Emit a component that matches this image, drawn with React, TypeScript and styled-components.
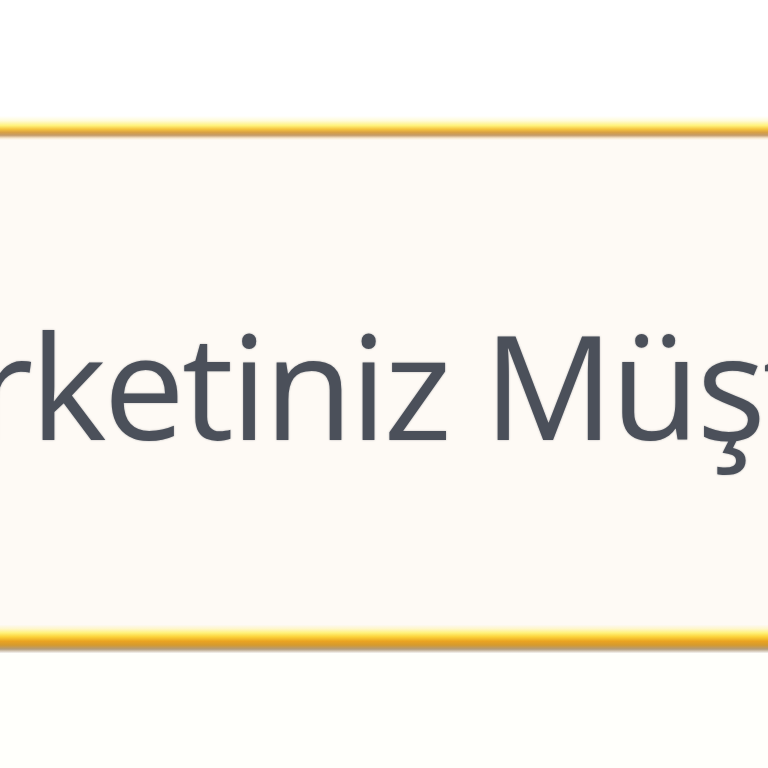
import React from "react";
import styled, { createGlobalStyle } from "styled-components";

const Global = createGlobalStyle`
  html, body { margin: 0; padding: 0; background: #ffffff; }
  body { font-family: "Open Sans", "Noto Sans", sans-serif; overflow: hidden; }
`;

const Page = styled.div`
  width: 768px;
  height: 768px;
  display: flex;
  flex-direction: column;
  padding-top: 116px;
  box-sizing: border-box;
  overflow: hidden;
  background: #ffffff;
`;

const Rule = styled.div<{ $flip?: boolean }>`
  height: ${(p) => (p.$flip ? 28 : 24)}px;
  flex: none;
  background: ${(p) =>
    p.$flip
      ? "linear-gradient(to bottom, #fdf9f1 0%, #fff6c8 14%, #fff27a 28%, #fcd33a 42%, #eaa321 58%, #d59a2e 72%, #b39c7a 86%, #f6f4f2 100%)"
      : "linear-gradient(to bottom, #ffffff 0%, #fffbd8 20%, #fff27a 40%, #f6c43e 55%, #d9a043 68%, #c49a68 80%, #f7e6cf 92%, #fffaf3 100%)"};
`;

const Body = styled.div`
  height: 485px;
  flex: none;
  background: #fefaf5;
  overflow: hidden;
  box-sizing: border-box;
  padding-top: 171px;
`;

const Caption = styled.div`
  font-family: "Open Sans", "Noto Sans", sans-serif;
  font-size: 145px;
  line-height: 1;
  color: #4b505a;
  white-space: nowrap;
  margin-left: -136px;
  letter-spacing: -3px;
  text-shadow: 0 0 2px rgba(75, 80, 90, 0.45);
`;

const Footer = styled.div`
  flex: 1;
  background: #fffffb;
`;

export default function App() {
  return (
    <>
      <Global />
      <Page>
        <Rule />
        <Body>
          <Caption>Şirketiniz Müşteri</Caption>
        </Body>
        <Rule $flip />
        <Footer />
      </Page>
    </>
  );
}
